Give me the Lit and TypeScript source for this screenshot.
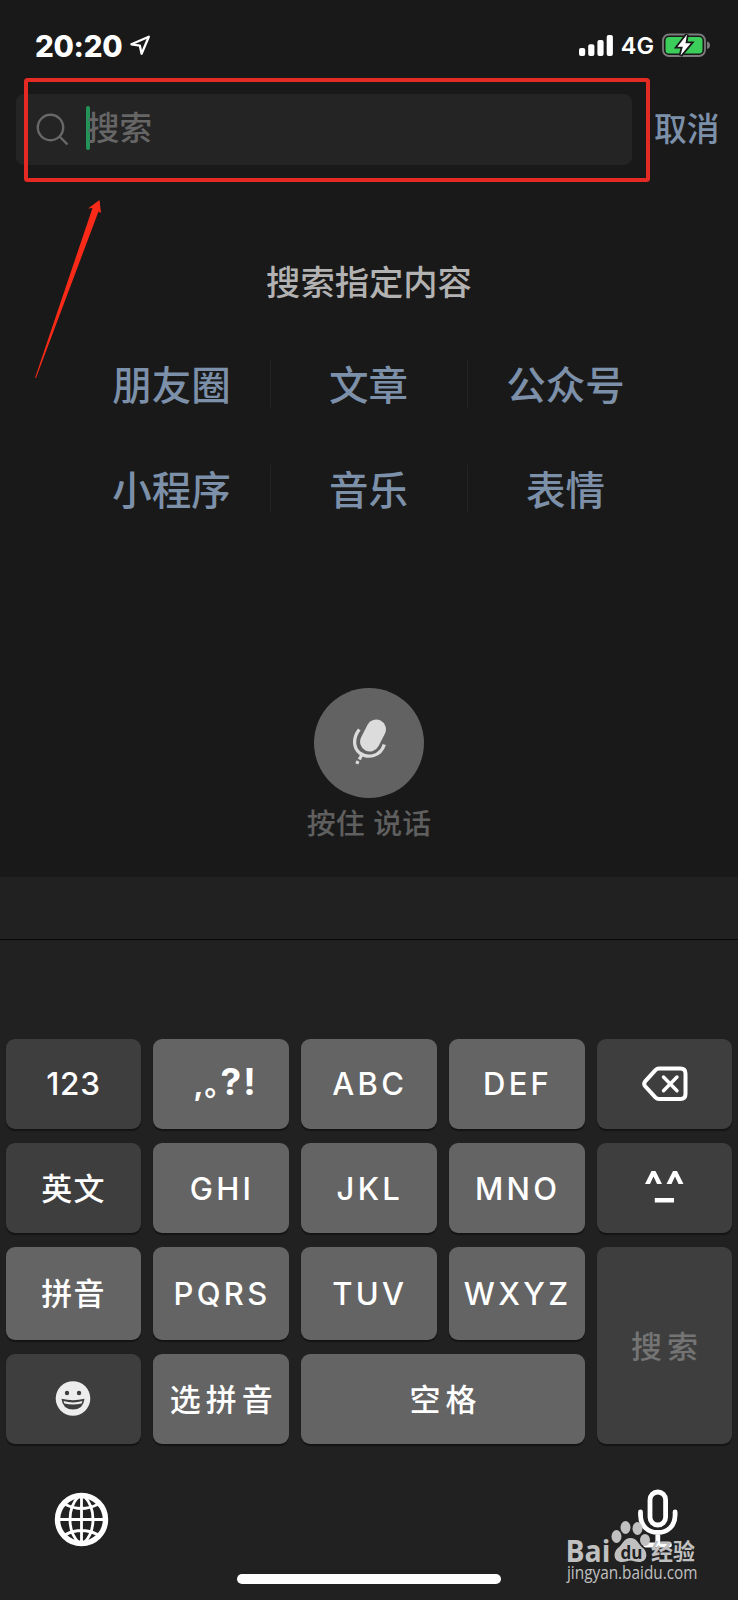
import { LitElement, html, css } from "lit";
import { customElement } from "lit/decorators.js";

const LINKS = ["朋友圈", "文章", "公众号", "小程序", "音乐", "表情"];

const backspace = html`<svg width="46" height="36" viewBox="0 0 46 36" fill="none" stroke="#fff">
  <path d="M17 2.500H38.500Q43.500 2.500 43.500 7.500V28Q43.500 33 38.500 33H17Q15 33 13.400 31.400L3.200 20.300Q1.200 17.800 3.200 15.300L13.400 4.100Q15 2.500 17 2.500Z" stroke-width="4"/>
  <path d="M21.500 11L35 24.800M35 11L21.500 24.800" stroke-width="3.400" stroke-linecap="round"/>
</svg>`;

const kaomoji = html`<svg width="39" height="34" viewBox="0 0 39 34" fill="#fff">
  <path d="M0 13L6.500 0H10.500L17 13H12L8.500 5.500L5 13Z M21.500 13L28 0H32L38.500 13H33.500L30 5.500L26.500 13Z M9.800 27H29V31.500H9.800Z"/>
</svg>`;

const smile = html`<svg width="36" height="36" viewBox="0 0 36 36">
  <circle cx="18" cy="17.500" r="17.300" fill="#ededed"/>
  <circle cx="12" cy="12" r="2.200" fill="#3e3e3e"/><circle cx="24" cy="12" r="2.200" fill="#3e3e3e"/>
  <path d="M6.500 17.800Q18 20.500 29.500 17.800Q28.500 28.500 18 28.500Q7.500 28.500 6.500 17.800Z" fill="#3e3e3e"/>
  <path d="M8.500 20.100Q18 22.700 27.500 20.100L26.600 22.500Q18 24.500 9.400 22.500Z" fill="#ededed"/>
</svg>`;

@customElement("app-root")
export class AppRoot extends LitElement {
  static styles = css`
    :host {
      display: flex; flex-direction: column; position: relative;
      width: 738px; height: 1600px; overflow: hidden; background: #191919; color: #fff;
      font-family: Inter, "Noto Sans CJK SC", sans-serif;
    }
    svg { display: block; flex: none; }
    .status { display: flex; align-items: center; height: 94px; padding: 0 28px 3px 35px; box-sizing: border-box; flex: none; }
    .time { font-size: 29.500px; font-weight: 800; letter-spacing: -0.300px; line-height: 36px; width: 87px; white-space: nowrap; }
    .loc { margin-left: 8px; }
    .signal { margin-left: auto; }
    .net { font-size: 23.500px; font-weight: 600; margin: 0 8px 0 7px; line-height: 30px; padding-top: 1px; }
    .top { display: flex; align-items: center; height: 71px; padding-left: 16px; flex: none; }
    .field { display: flex; align-items: center; width: 616px; height: 71px; border-radius: 8px; background: #242424; box-sizing: border-box; padding-left: 20px; }
    .caret { width: 4px; height: 44px; border-radius: 2px; background: #249358; margin: 0 0 3px 18px; }
    .hint { font-size: 32.500px; font-weight: 500; color: #666; line-height: 44px; margin: 0 0 1px -3px; }
    .cancel { font-size: 32.800px; font-weight: 500; color: #7d90a9; margin: 0 0 1px 22px; line-height: 44px; }
    .content { display: flex; flex-direction: column; align-items: center; height: 712px; flex: none; }
    h1 { margin: 93px 0 0; font-size: 34.300px; line-height: 50px; font-weight: 500; color: #b2b2b2; }
    .links { display: grid; grid-template-columns: repeat(3, 197px); row-gap: 57px; margin-top: 52px; }
    .link { display: flex; align-items: center; justify-content: center; box-sizing: border-box; height: 48px; padding-bottom: 4px; font-size: 39.500px; font-weight: 500; color: #7d90a9; border-right: 1px solid #242424; }
    .link:nth-child(3n) { border-color: transparent; }
    .talk { display: flex; align-items: center; justify-content: center; width: 110px; height: 110px; border-radius: 50%; background: #626262; margin-top: 174.500px; }
    .talk-label { font-size: 28.900px; font-weight: 500; color: #5f5f5f; margin-top: 5px; line-height: 42px; word-spacing: 1px; }
    .keyboard { display: flex; flex-direction: column; flex: 1; background: #212121; }
    .assist { height: 62px; border-bottom: 1px solid #070707; margin-bottom: 98.500px; flex: none; }
    .keys { display: grid; grid-template-columns: repeat(5, 135.600px); grid-template-rows: 90.500px 90.500px 93px 90.500px; column-gap: 12.200px; row-gap: 13.800px; padding-left: 5.700px; }
    .key { display: flex; align-items: center; justify-content: center; border-radius: 9px; background: #646464; box-shadow: 0 2px 1px #141414; font-size: 31px; font-weight: 550; letter-spacing: 3.300px; text-indent: 1.500px; }
    .dark { background: #3e3e3e; }
    .num { letter-spacing: 0.800px; text-indent: 0; font-size: 31.500px; }
    .cjk { letter-spacing: 1.200px; text-indent: 0; font-weight: 500; box-sizing: border-box; padding-bottom: 4px; }
    .wide { letter-spacing: 5px; text-indent: 5px; font-weight: 500; box-sizing: border-box; padding-bottom: 4px; }
    .space { grid-column: span 2; }
    .search { grid-column: 5; grid-row: 3 / 5; color: #747474; padding-bottom: 2px; }
    .punct { font-size: 37px; font-weight: 700; box-sizing: border-box; padding: 0 0 4px 7px; letter-spacing: 2px; }
    .punct small { font-size: 30px; letter-spacing: 1px; }
    .bottom { display: flex; justify-content: space-between; padding: 44px 59px 0 54px; }
    .globe { margin-top: 4px; }
    .home { width: 264px; height: 10px; border-radius: 5px; background: #fff; margin: auto auto 16px; }
    .marks { position: absolute; left: 0; top: 0; pointer-events: none; }
    .brand { position: absolute; left: 566px; top: 1518px; width: 140px; height: 74px; color: #c0c0c0; }
    .latin { font: 700 30px "Open Sans", sans-serif; }
    .du { font: 700 17px "Open Sans", sans-serif; }
    .han { font: 700 22.500px "Noto Sans CJK SC", sans-serif; }
    .url { font: 500 17.500px "Open Sans", sans-serif; }
  `;

  private key(label: unknown, cls = "") {
    return html`<div class="key ${cls}">${label}</div>`;
  }

  render() {
    return html`
      <div class="status">
        <span class="time">20:20</span>
        <svg class="loc" width="22" height="22" viewBox="0 0 22 22" fill="none" stroke="#fff" stroke-width="2.300" stroke-linejoin="round"><path d="M1.400 9.300L18.800 1.800L11.600 18.800L9.800 10.600Z"/></svg>
        <svg class="signal" width="35" height="21" viewBox="0 0 35 21" fill="#fff">
          <rect x="0" y="13" width="6.200" height="8" rx="2"/><rect x="9.200" y="9.300" width="6.200" height="11.700" rx="2"/><rect x="18.400" y="5" width="6.200" height="16" rx="2"/><rect x="27.700" y="0" width="6.200" height="21" rx="2"/>
        </svg>
        <span class="net">4G</span>
        <svg width="48" height="25" viewBox="0 0 48 25">
          <rect x="1" y="1.500" width="42" height="21.500" rx="6" fill="none" stroke="#7b7b7b" stroke-width="1.800"/>
          <path d="M45 8.500Q48 9 48 12.250Q48 15.500 45 16Z" fill="#7b7b7b"/>
          <rect x="3.500" y="4" width="37" height="16.500" rx="3.500" fill="#3bce5b"/>
          <path d="M25 1.500L15.500 13.800H20.800L18.500 22.500L28.800 10.300H23.500Z" fill="#fff" stroke="#191919" stroke-width="3.600" paint-order="stroke"/>
        </svg>
      </div>
      <div class="top">
        <div class="field">
          <svg width="32" height="34" viewBox="0 0 32 34" fill="none" stroke="#686868" stroke-width="2.400"><circle cx="14.500" cy="14.500" r="12.700"/><path d="M23.500 23.500L31.500 31.500"/></svg>
          <span class="caret"></span><span class="hint">搜索</span>
        </div>
        <span class="cancel">取消</span>
      </div>
      <div class="content">
        <h1>搜索指定内容</h1>
        <div class="links">${LINKS.map((l) => html`<div class="link">${l}</div>`)}</div>
        <div class="talk">
          <svg width="36" height="48" viewBox="0 0 36 48">
            <rect x="12.200" y="-0.200" width="19.600" height="33.400" rx="9.800" fill="#dcdcdc" transform="rotate(27 22 16.500)"/>
            <path d="M8.300 10.500C1.500 19 2.500 29 8.500 33.800C17 40 29.500 37.500 33.300 25.500" fill="none" stroke="#dcdcdc" stroke-width="3.300"/>
            <path d="M11 35.500L8.300 40.500M7 42L5.800 44.800" stroke="#dcdcdc" stroke-width="3.200"/>
          </svg>
        </div>
        <div class="talk-label">按住 说话</div>
      </div>
      <div class="keyboard">
        <div class="assist"></div>
        <div class="keys">
          ${this.key("123", "dark num")}${this.key(html`<span><small>,｡</small>?!</span>`, "punct")}${this.key("ABC")}${this.key("DEF")}${this.key(backspace, "dark")}
          ${this.key("英文", "dark cjk")}${this.key("GHI")}${this.key("JKL")}${this.key("MNO")}${this.key(kaomoji, "dark")}
          ${this.key("拼音", "cjk")}${this.key("PQRS")}${this.key("TUV")}${this.key("WXYZ")}${this.key("搜索", "dark wide search")}
          ${this.key(smile, "dark")}${this.key("选拼音", "wide")}${this.key("空格", "wide space")}
        </div>
        <div class="bottom">
          <svg class="globe" width="55" height="55" viewBox="0 0 55 55" fill="none" stroke="#fff" stroke-width="2.800">
            <circle cx="27.500" cy="27.500" r="24" stroke-width="5.400"/>
            <path d="M25 4C13 16 13 39 25 51M30 4C42 16 42 39 30 51"/>
            <path d="M27.500 4V51M4 27.500H51M11.500 12.500Q27.500 20.500 43.500 12.500M11.500 42.500Q27.500 34.500 43.500 42.500"/>
          </svg>
          <svg width="42" height="60" viewBox="0 0 42 60" fill="none" stroke="#fff" stroke-width="4.800" stroke-linecap="round">
            <rect x="13" y="4" width="15.600" height="33" rx="7.800"/>
            <path d="M3.500 24V27C3.500 38 11 44.500 20.800 44.500S38.100 38 38.100 27V24M20.800 45V57M8.500 57H32.500"/>
          </svg>
        </div>
        <div class="home"></div>
      </div>
      <svg class="marks" width="738" height="400" viewBox="0 0 738 400">
        <rect x="26" y="80" width="622" height="100" rx="1.500" fill="none" stroke="#e42a22" stroke-width="4"/>
        <path d="M35 378L92.500 208L88 208.500L99.500 200L101 213L98.500 211.500L36 378Z" fill="#f92a18"/>
      </svg>
      <svg class="brand" viewBox="0 0 140 74" fill="currentColor">
        <text class="latin" x="-0.500" y="43.500" textLength="45" lengthAdjust="spacingAndGlyphs">Bai</text>
        <ellipse cx="50.500" cy="18.500" rx="5" ry="6.500"/><ellipse cx="59.500" cy="9.500" rx="5" ry="6.500"/><ellipse cx="71.500" cy="10.500" rx="5" ry="6.500"/><ellipse cx="79" cy="22" rx="5" ry="6"/>
        <path d="M64.500 20C71 20 72 26 77 30C82 34 82 44 73 44C69 44 67 42.500 64.500 42.500S60 44 56 44C47 44 47 34 52 30C57 26 58 20 64.500 20Z"/>
        <text class="du" x="54.500" y="40.500" fill="#212121">du</text>
        <text class="han" x="85" y="42" textLength="44" lengthAdjust="spacingAndGlyphs">经验</text>
        <text class="url" x="1" y="61" textLength="130.500" lengthAdjust="spacingAndGlyphs">jingyan.baidu.com</text>
      </svg>
    `;
  }
}
